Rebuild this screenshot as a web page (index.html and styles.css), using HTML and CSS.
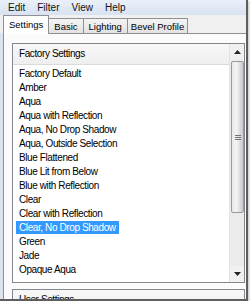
FILE: index.html
```html
<!DOCTYPE html>
<html lang="en">
  <head>
    <meta charset="UTF-8" />
    <meta name="viewport" content="width=device-width, initial-scale=1.0" />
    <title>Bevel Settings</title>
    <link rel="stylesheet" href="styles.css">
  </head>
  <body>
    <div class="window">
      <div class="menubar">
        <span class="menu">Edit</span>
        <span class="menu">Filter</span>
        <span class="menu">View</span>
        <span class="menu">Help</span>
      </div>

      <div class="client">
        <div class="tabs">
          <div class="tab active">Settings</div>
          <div class="tab">Basic</div>
          <div class="tab">Lighting</div>
          <div class="tab">Bevel Profile</div>
        </div>

        <div class="panel">
          <div class="listbox">
            <div class="list-main">
              <div class="list-header">Factory Settings</div>
              <ul class="items">
                <li><span>Factory Default</span></li>
                <li><span>Amber</span></li>
                <li><span>Aqua</span></li>
                <li><span>Aqua with Reflection</span></li>
                <li><span>Aqua, No Drop Shadow</span></li>
                <li><span>Aqua, Outside Selection</span></li>
                <li><span>Blue Flattened</span></li>
                <li><span>Blue Lit from Below</span></li>
                <li><span>Blue with Reflection</span></li>
                <li><span>Clear</span></li>
                <li><span>Clear with Reflection</span></li>
                <li class="selected"><span>Clear, No Drop Shadow</span></li>
                <li><span>Green</span></li>
                <li><span>Jade</span></li>
                <li><span>Opaque Aqua</span></li>
              </ul>
            </div>
            <div class="scrollbar">
              <div class="arrow up">
                <svg width="7" height="4" viewBox="0 0 7 4"><path d="M3.5 0 L7 4 L0 4 Z" fill="#222"/></svg>
              </div>
              <div class="thumb">
                <span class="grip"></span>
              </div>
              <div class="track"></div>
              <div class="arrow down">
                <svg width="7" height="4" viewBox="0 0 7 4"><path d="M0 0 L7 0 L3.5 4 Z" fill="#222"/></svg>
              </div>
            </div>
          </div>

          <div class="listbox user">
            <div class="list-main">
              <div class="list-header">User Settings</div>
            </div>
          </div>
        </div>
      </div>
    </div>
  </body>
</html>
```

FILE: styles.css
```css
body {
  margin: 0;
  background: #ffffff;
  font-family: "Liberation Sans", Arial, sans-serif;
  font-size: 9.5px;
  color: #000;
  overflow: hidden;
}
.window {
  width: 246px;
  height: 299px;
  border-right: 2px solid #5e5e5e;
  border-bottom: 2px solid #5e5e5e;
  box-shadow: 1px 1px 2px rgba(0, 0, 0, 0.25);
  display: flex;
  flex-direction: column;
  overflow: hidden;
}
.menubar {
  height: 15px;
  flex-shrink: 0;
  display: flex;
  align-items: center;
  gap: 12px;
  padding-left: 8px;
  background: linear-gradient(#eaf0f9, #d8e2f1);
  font-size: 10px;
  color: #111;
}
.client {
  flex: 1;
  display: flex;
  flex-direction: column;
  padding-left: 3px;
  background: #dae3ef;
  min-height: 0;
}
.tabs {
  height: 18px;
  flex-shrink: 0;
  display: flex;
  align-items: flex-end;
  background: #f0f0f0;
  margin-left: -3px;
  padding-left: 3px;
}
.tab {
  height: 14px;
  line-height: 15px;
  padding: 0 5px;
  border: 1px solid #8e9095;
  border-bottom: none;
  border-left: none;
  background: linear-gradient(#f4f4f4, #e2e2e2);
}
.tab:last-child {
  padding: 0 3px;
}
.tab.active {
  height: 18px;
  line-height: 17px;
  border-left: 1px solid #8e9095;
  padding: 0 5px;
  background: #ffffff;
  margin-bottom: -1px;
  position: relative;
}
.panel {
  flex: 1;
  min-height: 0;
  border-top: 1px solid #8e9095;
  border-left: 1px solid #8e9095;
  background: #fbfbfb;
  padding: 9px 1px 0 8px;
  display: flex;
  flex-direction: column;
  gap: 6px;
}
.listbox {
  height: 238px;
  flex-shrink: 0;
  border: 1px solid #828790;
  background: #ffffff;
  display: flex;
  font-size: 10px;
  letter-spacing: -0.4px;
}
.listbox.user {
  height: 40px;
}
.list-main {
  flex: 1;
  min-width: 0;
}
.list-header {
  height: 20px;
  line-height: 20px;
  padding-left: 6px;
  background: linear-gradient(#f7f7f7, #efefef);
  border-bottom: 1px solid #d9dadc;
}
.items {
  list-style: none;
  margin: 0;
  padding: 2px 0 0 3px;
}
.items li {
  height: 14px;
  line-height: 13px;
}
.items li span {
  display: inline-block;
  height: 13px;
  padding: 0 3px;
}
.items li.selected span {
  background: #3399ff;
  color: #ffffff;
}
.scrollbar {
  width: 14px;
  display: flex;
  flex-direction: column;
  background: #ebebeb;
  border-left: 1px solid #e3e3e3;
}
.arrow {
  height: 16px;
  display: flex;
  align-items: center;
  justify-content: center;
  background: #f0f0f0;
}
.thumb {
  height: 150px;
  margin: 1px 0 0 1px;
  border: 1px solid #999a9c;
  border-radius: 2px;
  background: linear-gradient(90deg, #e8e8e8, #f4f4f4 40%, #d6d6d8 80%, #c9c9cc);
  display: flex;
  align-items: center;
  justify-content: center;
}
.grip {
  width: 6px;
  height: 5px;
  background: repeating-linear-gradient(#6f7277 0 1px, transparent 1px 2px);
}
.track {
  flex: 1;
  background: #ebebeb;
}
```
